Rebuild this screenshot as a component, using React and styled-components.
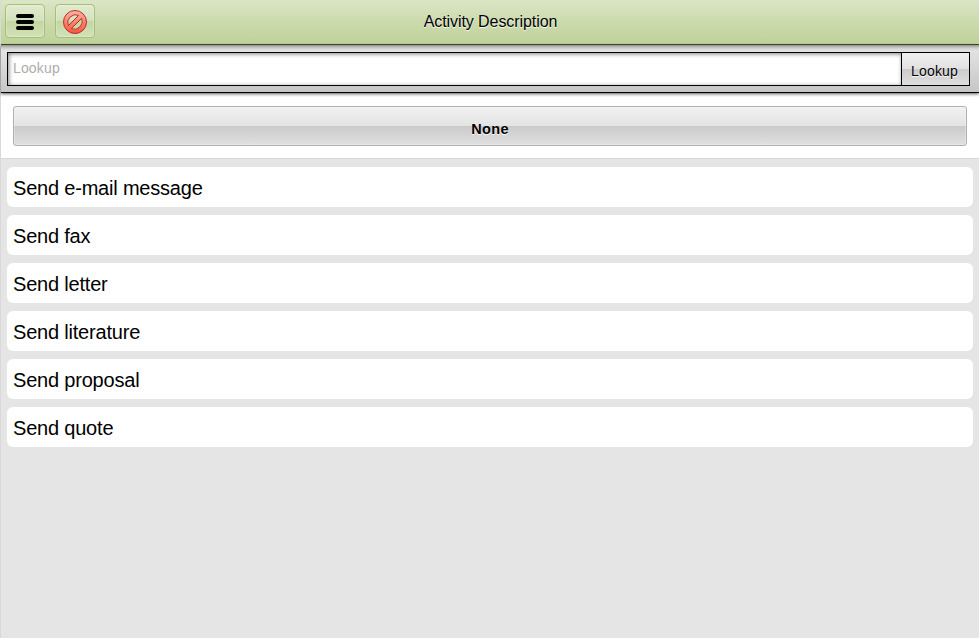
import React from "react";
import styled, { createGlobalStyle } from "styled-components";

const GlobalStyle = createGlobalStyle`
  *, *::before, *::after { box-sizing: border-box; }
  html, body, #root { height: 100%; }
  body { margin: 0; overflow: hidden; font-family: "Liberation Sans", Arial, sans-serif; color: #000; }
`;

const Page = styled.div`
  display: flex;
  flex-direction: column;
  height: 100%;
  background: #e5e5e5;
  border-left: 1px solid #d9d9d9;
`;

const Toolbar = styled.header`
  display: grid;
  grid-template-columns: 1fr auto 1fr;
  flex: none;
  height: 45px;
  padding: 4px 4px 0;
  background: linear-gradient(#dbe6c6 0%, #cbdbac 50%, #bfd29a 100%);
  border-bottom: 1px solid #3d5220;
`;

const ToolGroup = styled.div`
  display: flex;
  align-items: flex-start;
  gap: 10px;
`;

const ToolButton = styled.button`
  display: flex;
  align-items: center;
  justify-content: center;
  width: 40px;
  height: 34px;
  padding: 1px 0 0;
  border: 1px solid #a5c07a;
  border-radius: 4px;
  background: linear-gradient(#e1ebd0 0%, #d3e1bb 50%, #c3d6a1 50%, #d3e2b8 100%);
  box-shadow: inset 0 0 0 1px rgba(255, 255, 255, 0.2);
`;

const Title = styled.h1`
  margin: 0;
  font-size: 16px;
  font-weight: 400;
  line-height: 18px;
  padding: 9px 0 0 1px;
  letter-spacing: -0.08px;
  text-shadow: 0 1px 1px #fff;
`;

const SearchBar = styled.form`
  display: flex;
  flex: none;
  height: 48px;
  padding: 7px 9px 6px 6px;
  border-bottom: 1px solid #000;
  background: linear-gradient(#8f8f8f 0, #bdbdbd 2px, #d8d8d8 4px, #e2e2e2 6px, #c6c6c6 100%);
  box-shadow: 0 1px 3px rgba(0, 0, 0, 0.65);
  z-index: 1;
`;

const SearchInput = styled.input`
  flex: 1;
  min-width: 0;
  height: 34px;
  padding: 0 5px 2px;
  border: 1px solid #000;
  border-radius: 0;
  outline: none;
  background: #fff;
  box-shadow: inset 1px 1px 4px rgba(0, 0, 0, 0.5);
  font: 14px "Liberation Sans", Arial, sans-serif;
  letter-spacing: 0.15px;
  &::placeholder { color: #b0abab; opacity: 1; }
`;

const SearchButton = styled.button`
  width: 68px;
  height: 34px;
  padding: 4px 2px 0 0;
  border: 1px solid #000;
  border-left: 0;
  background: linear-gradient(#f0f0f0 0%, #e1e1e1 50%, #cbcbcb 50%, #dedede 100%);
  font: 14px "Liberation Sans", Arial, sans-serif;
  letter-spacing: 0.2px;
  color: #000;
  text-shadow: 0 1px 1px #fff;
`;

const ClearPanel = styled.section`
  flex: none;
  height: 66px;
  padding: 13px 12px 12px;
  background: #fff;
  border-bottom: 1px solid #d9d9d9;
`;

const ClearButton = styled.button`
  display: block;
  width: 100%;
  height: 40px;
  padding: 6px 0 0;
  border: 1px solid #afafaf;
  border-radius: 3px;
  background: linear-gradient(#f1f1f1 0%, #e3e3e3 50%, #cacaca 50%, #e0e0e0 100%);
  box-shadow: inset 0 0 0 1px rgba(255, 255, 255, 0.25);
  font: bold 14.5px "Liberation Sans", Arial, sans-serif;
  letter-spacing: 0.35px;
  color: #000;
  text-shadow: 0 1px 1px #fff;
`;

const ActivityList = styled.ul`
  display: flex;
  flex-direction: column;
  gap: 8px;
  margin: 0;
  padding: 8px 6px;
  list-style: none;
`;

const ActivityRow = styled.li`
  height: 40px;
  padding: 0 6px;
  border-radius: 6px;
  background: #fff;
  font-size: 20px;
  letter-spacing: -0.2px;
  line-height: 42px;
`;

const MenuIcon = () => (
  <svg width="18" height="16" viewBox="0 0 18 16" aria-hidden="true">
    <path d="M2 2h14M2 8h14M2 14h14" stroke="#000" strokeWidth="4" strokeLinecap="round" />
  </svg>
);

const CancelIcon = () => (
  <svg width="26" height="26" viewBox="0 0 26 26" aria-hidden="true">
    <defs>
      <linearGradient id="cancelFill" x1="0" y1="0" x2="0" y2="1">
        <stop offset="0" stopColor="#ffb4a0" />
        <stop offset="1" stopColor="#fa5340" />
      </linearGradient>
    </defs>
    <path
      d="M13 1.5a11.5 11.5 0 1 0 0 23a11.5 11.5 0 1 0 0-23zM6.3 16.7A8 8 0 0 1 16.7 6.3zM19.7 9.3A8 8 0 0 1 9.3 19.7z"
      fill="url(#cancelFill)"
      fillRule="evenodd"
      stroke="#b62e2c"
      strokeWidth="1"
      strokeLinejoin="round"
    />
  </svg>
);

const activities = [
  "Send e-mail message",
  "Send fax",
  "Send letter",
  "Send literature",
  "Send proposal",
  "Send quote",
];

export default function App() {
  return (
    <>
      <GlobalStyle />
      <Page>
        <Toolbar>
          <ToolGroup>
            <ToolButton aria-label="Menu"><MenuIcon /></ToolButton>
            <ToolButton aria-label="Cancel"><CancelIcon /></ToolButton>
          </ToolGroup>
          <Title>Activity Description</Title>
        </Toolbar>
        <SearchBar onSubmit={(e) => e.preventDefault()}>
          <SearchInput placeholder="Lookup" />
          <SearchButton>Lookup</SearchButton>
        </SearchBar>
        <ClearPanel>
          <ClearButton>None</ClearButton>
        </ClearPanel>
        <ActivityList>
          {activities.map((name) => (
            <ActivityRow key={name}>{name}</ActivityRow>
          ))}
        </ActivityList>
      </Page>
    </>
  );
}
